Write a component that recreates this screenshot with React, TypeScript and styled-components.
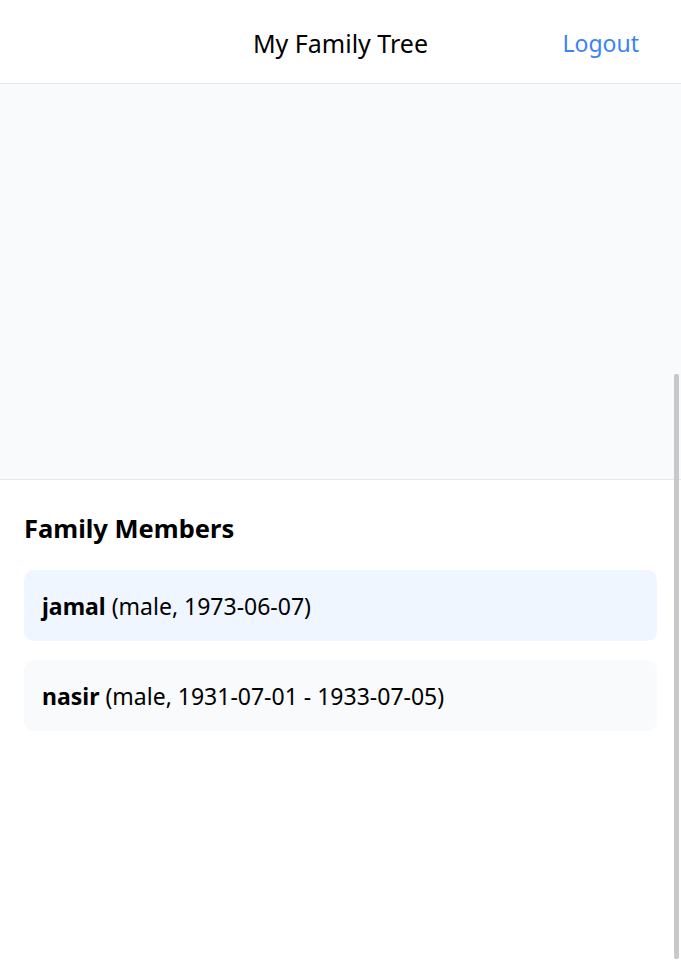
import React from "react";
import styled, { createGlobalStyle } from "styled-components";

const Global = createGlobalStyle`
  html, body { margin: 0; padding: 0; background: #ffffff; }
  body { font-family: "Segoe UI", "Noto Sans", "Open Sans", sans-serif; color: #000; }
  * { box-sizing: border-box; }
`;

const Page = styled.div`
  position: relative;
  min-height: 960px;
  display: flex;
  flex-direction: column;
`;

const Header = styled.header`
  height: 84px;
  display: grid;
  grid-template-columns: 1fr auto 1fr;
  align-items: center;
  padding: 2px 42px 0 42px;
  border-bottom: 1px solid #e5e7eb;
`;

const Title = styled.h1`
  grid-column: 2;
  margin: 0;
  font-size: 25px;
  line-height: 32px;
  font-weight: 400;
`;

const LogoutButton = styled.button`
  grid-column: 3;
  justify-self: end;
  background: none;
  border: none;
  padding: 0;
  font: inherit;
  font-size: 23px;
  line-height: 32px;
  color: #3b82f6;
  cursor: pointer;
`;

const Canvas = styled.div`
  height: 396px;
  background: #f9fafb;
  border-bottom: 1px solid #e5e7eb;
`;

const ListSection = styled.section`
  padding: 24px;
  display: flex;
  flex-direction: column;
  gap: 19px;
`;

const Heading = styled.h2`
  margin: 8px 0 7px;
  font-size: 25.5px;
  line-height: 32px;
  font-weight: 700;
`;

const MemberCard = styled.div<{ $selected?: boolean }>`
  height: 71px;
  display: flex;
  align-items: center;
  padding: 0 18px;
  border-radius: 10px;
  background: ${(p) => (p.$selected ? "#eff6ff" : "#f9fafb")};
  font-size: 23px;
`;

const Name = styled.strong`
  font-weight: 700;
`;

const ScrollThumb = styled.div`
  position: absolute;
  right: 2px;
  top: 374px;
  width: 5px;
  height: 585px;
  background: #c8c8c8;
  border-radius: 2px;
`;

const members = [
  { name: "jamal", info: "(male, 1973-06-07)", selected: true },
  { name: "nasir", info: "(male, 1931-07-01 - 1933-07-05)", selected: false },
];

export default function App() {
  return (
    <>
      <Global />
      <Page>
        <Header>
          <Title>My Family Tree</Title>
          <LogoutButton>Logout</LogoutButton>
        </Header>
        <Canvas />
        <ListSection>
          <Heading>Family Members</Heading>
          {members.map((m) => (
            <MemberCard key={m.name} $selected={m.selected}>
              <Name>{m.name}</Name>&nbsp;{m.info}
            </MemberCard>
          ))}
        </ListSection>
        <ScrollThumb />
      </Page>
    </>
  );
}
